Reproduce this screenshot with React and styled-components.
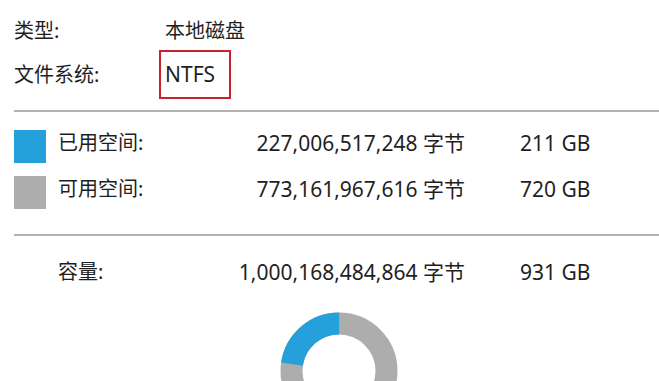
import React from "react";
import styled, { createGlobalStyle } from "styled-components";

const GlobalStyle = createGlobalStyle`
  html, body {
    margin: 0;
    padding: 0;
    background: #ffffff;
    overflow: hidden;
  }
  body {
    font-family: "Noto Sans", "Noto Sans CJK SC", sans-serif;
    color: #1f1f1f;
  }
`;

const USED = 227006517248;
const TOTAL = 1000168484864;

export default function App() {
  return (
    <>
      <GlobalStyle />
      <Page>
        <InfoGrid>
          <Label>类型:</Label>
          <Value>本地磁盘</Value>
          <Label>文件系统:</Label>
          <Value>
            <Highlight>NTFS</Highlight>
          </Value>
        </InfoGrid>

        <Divider />

        <SpaceGrid>
          <Swatch $color="#26a0da" />
          <Label>已用空间:</Label>
          <Bytes>227,006,517,248 字节</Bytes>
          <Size>211 GB</Size>

          <Swatch $color="#adadad" />
          <Label>可用空间:</Label>
          <Bytes>773,161,967,616 字节</Bytes>
          <Size>720 GB</Size>
        </SpaceGrid>

        <Divider $gap={22} />

        <CapacityRow>
          <span />
          <Label>容量:</Label>
          <Bytes>1,000,168,484,864 字节</Bytes>
          <Size>931 GB</Size>
        </CapacityRow>

        <ChartWrap>
          <Donut used={USED / TOTAL} />
        </ChartWrap>
      </Page>
    </>
  );
}

function Donut({ used }) {
  const r = 47.5;
  const c = 2 * Math.PI * r;
  const usedLen = c * used;
  const startAngle = -90 - used * 360;
  return (
    <svg width="118" height="118" viewBox="0 0 118 118">
      <circle cx="59" cy="59" r={r} fill="none" stroke="#adadad" strokeWidth="22" />
      <circle
        cx="59"
        cy="59"
        r={r}
        fill="none"
        stroke="#26a0da"
        strokeWidth="22"
        strokeDasharray={`${usedLen} ${c}`}
        transform={`rotate(${startAngle} 59 59)`}
      />
    </svg>
  );
}

const Page = styled.div`
  padding: 12px 0 0 14px;
  font-size: 20px;
`;

const InfoGrid = styled.div`
  display: grid;
  grid-template-columns: 151px auto;
  grid-template-rows: 38px 49px;
  align-items: center;
`;

const Label = styled.span`
  white-space: nowrap;
  line-height: 1;
`;

const Value = styled.span`
  white-space: nowrap;
  line-height: 1;
`;

const Highlight = styled.span`
  display: inline-flex;
  align-items: center;
  height: 49px;
  box-sizing: border-box;
  margin-left: -6px;
  padding: 0 14px 0 4px;
  border: 2.5px solid #c8232c;
  font-size: 21px;
`;

const Divider = styled.hr`
  margin: ${({ $gap }) => $gap ?? 11}px 0 0 0;
  border: 0;
  height: 2px;
  background: #b2b2b2;
`;

const SpaceGrid = styled.div`
  display: grid;
  grid-template-columns: 44px 150px 257px auto;
  grid-template-rows: 46px 46px;
  align-items: center;
  margin-top: 8px;
`;

const Swatch = styled.div`
  width: 32px;
  height: 33px;
  align-self: start;
  margin-top: 10px;
  background: ${({ $color }) => $color};
`;

const Bytes = styled.span`
  text-align: right;
  white-space: nowrap;
  line-height: 1;
  font-size: 21px;
`;

const Size = styled.span`
  padding-left: 55px;
  white-space: nowrap;
  line-height: 1;
  font-size: 21px;
`;

const CapacityRow = styled(SpaceGrid)`
  grid-template-rows: 46px;
  margin-top: 13px;
`;

const ChartWrap = styled.div`
  display: flex;
  padding-left: 266px;
  margin-top: 17px;
`;
